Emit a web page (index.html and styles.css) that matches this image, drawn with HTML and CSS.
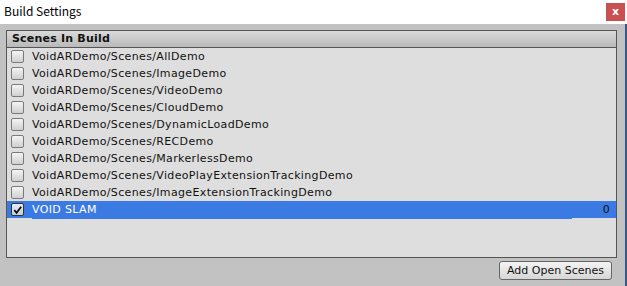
FILE: index.html
```html
<!DOCTYPE html>
<html lang="en">
<head>
    <meta charset="UTF-8">
    <title>Build Settings</title>
    <link rel="stylesheet" href="styles.css">
</head>
<body>
    <div class="window">
        <div class="title-bar">
            <span class="title">Build Settings</span>
            <button class="close-btn">x</button>
        </div>

        <div class="content">
            <div class="scenes-panel">
                <div class="panel-header">Scenes In Build</div>
                <ul class="scene-list">
                    <li class="scene-row"><span class="check"></span><span class="scene-name">VoidARDemo/Scenes/AllDemo</span></li>
                    <li class="scene-row"><span class="check"></span><span class="scene-name">VoidARDemo/Scenes/ImageDemo</span></li>
                    <li class="scene-row"><span class="check"></span><span class="scene-name">VoidARDemo/Scenes/VideoDemo</span></li>
                    <li class="scene-row"><span class="check"></span><span class="scene-name">VoidARDemo/Scenes/CloudDemo</span></li>
                    <li class="scene-row"><span class="check"></span><span class="scene-name">VoidARDemo/Scenes/DynamicLoadDemo</span></li>
                    <li class="scene-row"><span class="check"></span><span class="scene-name">VoidARDemo/Scenes/RECDemo</span></li>
                    <li class="scene-row"><span class="check"></span><span class="scene-name">VoidARDemo/Scenes/MarkerlessDemo</span></li>
                    <li class="scene-row"><span class="check"></span><span class="scene-name">VoidARDemo/Scenes/VideoPlayExtensionTrackingDemo</span></li>
                    <li class="scene-row"><span class="check"></span><span class="scene-name">VoidARDemo/Scenes/ImageExtensionTrackingDemo</span></li>
                    <li class="scene-row selected">
                        <span class="check checked">
                            <svg width="12" height="12" viewBox="0 0 12 12"><path d="M2.5 6.2 L5 9 L10 2.5" fill="none" stroke="#111" stroke-width="2"/></svg>
                        </span>
                        <span class="scene-name">VOID SLAM</span>
                        <span class="scene-index">0</span>
                    </li>
                </ul>
            </div>

            <div class="actions">
                <button class="add-btn">Add Open Scenes</button>
            </div>
        </div>
    </div>
</body>
</html>
```

FILE: styles.css
```css
body {
    margin: 0;
    background-color: #c2c2c2;
    font-family: "DejaVu Sans", Verdana, sans-serif;
    color: #111;
}

.window {
    width: 625px;
    height: 286px;
    border-right: 2px solid #3b5a86;
    box-sizing: content-box;
}

.title-bar {
    height: 24px;
    background-color: white;
    display: flex;
    align-items: center;
    justify-content: space-between;
    margin-right: -2px;
}

.title {
    font-family: "Noto Sans CJK SC", "Noto Sans", sans-serif;
    font-size: 12px;
    color: #000;
    padding-left: 4px;
    margin-top: -4px;
}

.close-btn {
    width: 19px;
    height: 18px;
    margin: 3px 2px 0 0;
    padding: 0;
    border: none;
    background-color: #c75050;
    color: white;
    font-family: "DejaVu Sans", sans-serif;
    font-weight: bold;
    font-size: 11px;
    line-height: 16px;
    align-self: flex-start;
}

.content {
    padding: 6px 9px 0 6px;
}

.scenes-panel {
    width: 611px;
    box-sizing: border-box;
    border: 1px solid #555;
    background-color: #dedede;
}

.panel-header {
    height: 16px;
    border-bottom: 1px solid #555;
    background: linear-gradient(#dadada, #b9b9b9);
    font-weight: bold;
    font-size: 11px;
    letter-spacing: 0.2px;
    line-height: 16px;
    padding-left: 5px;
}

.scene-list {
    list-style-type: none;
    margin: 0;
    padding: 0;
    height: 209px;
}

.scene-row {
    height: 17px;
    display: flex;
    align-items: center;
    font-size: 11px;
    letter-spacing: 0.35px;
}

.check {
    width: 11px;
    height: 11px;
    margin: 0 8px 0 4px;
    border: 1px solid #7a7a7a;
    border-radius: 2px;
    background: linear-gradient(#f4f4f4, #d0d0d0);
    display: flex;
    align-items: center;
    justify-content: center;
}

.check.checked {
    background: linear-gradient(#e6ecf4, #c4cfdc);
    border-color: #333;
}

.scene-name {
    line-height: 17px;
}

.scene-row.selected {
    background-color: #3b7ae2;
    color: white;
}

.scene-row.selected .scene-name {
    flex: 1;
    align-self: stretch;
    margin: 0 31px -1px 0;
    background-color: #3b7ae2;
}

.scene-index {
    color: #111;
    padding-right: 6px;
}

.actions {
    display: flex;
    justify-content: flex-end;
    padding: 3px 5px 0 0;
    width: 611px;
    box-sizing: border-box;
}

.add-btn {
    width: 113px;
    height: 19px;
    padding: 0;
    border: 1px solid #666;
    border-radius: 3px;
    background: linear-gradient(#f4f4f4, #d6d6d6);
    font-family: "DejaVu Sans", Verdana, sans-serif;
    font-size: 11px;
    color: #111;
}
```
